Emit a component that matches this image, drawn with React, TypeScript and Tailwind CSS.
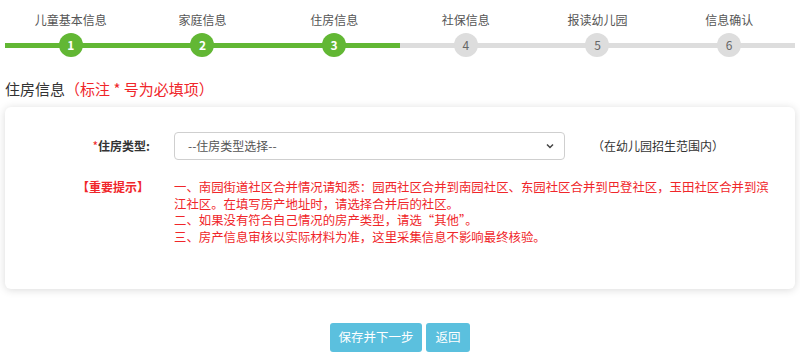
import React from "react";

const steps = ["儿童基本信息", "家庭信息", "住房信息", "社保信息", "报读幼儿园", "信息确认"];
const current = 3;

const font = "font-['Microsoft_YaHei','Noto_Sans_CJK_SC',sans-serif]";

const App = () => {
  return (
    <div className={`w-[800px] h-[364px] bg-white overflow-hidden ${font}`}>
      {/* steps */}
      <div className="relative px-[5px] pt-[12px]">
        <div className="absolute left-[5px] right-[5px] top-[43px] h-[5px] bg-[#dddddd]" />
        <div className="absolute left-[5px] w-[395px] top-[43px] h-[5px] bg-[#62b734]" />
        <div className="relative grid grid-cols-6">
          {steps.map((s, i) => {
            const done = i + 1 <= current;
            return (
              <div key={s} className="flex flex-col items-center">
                <span className="text-[12px] leading-[16px] text-[#555]">{s}</span>
                <span
                  className={
                    done
                      ? "mt-[5px] w-[24px] h-[24px] rounded-full bg-[#62b734] text-white text-[12px] font-bold flex items-center justify-center"
                      : "mt-[5px] w-[24px] h-[24px] rounded-full bg-[#dddddd] text-[#666] text-[12px] flex items-center justify-center"
                  }
                >
                  {i + 1}
                </span>
              </div>
            );
          })}
        </div>
      </div>

      {/* heading */}
      <h2 className="mt-[22px] px-[5px] text-[15px] leading-[20px] text-[#333]">
        住房信息<span className="text-[#f0262a]">（标注 * 号为必填项）</span>
      </h2>

      {/* card */}
      <div className="mx-[5px] mt-[8px] h-[182px] rounded-[6px] bg-white shadow-[0_1px_8px_rgba(0,0,0,0.15)] pt-[25px]">
        <div className="flex items-center h-[28px]">
          <label className="w-[145px] text-right text-[12px] font-bold text-[#333]">
            <span className="text-[#f0262a] font-normal">*</span>住房类型:
          </label>
          <div className="ml-[24px] w-[391px] h-[28px] border border-[#cfcfcf] rounded-[4px] flex items-center justify-between px-[13px] text-[12px] text-[#555]">
            <span>--住房类型选择--</span>
            <svg width="10" height="10" viewBox="0 0 10 10" className="-mr-[4px]">
              <path d="M2 3.5 L5 6.5 L8 3.5" fill="none" stroke="#444" strokeWidth="1.5" />
            </svg>
          </div>
          <span className="ml-[27px] text-[12px] text-[#333]">（在幼儿园招生范围内）</span>
        </div>

        <div className="flex mt-[19px]">
          <div className="w-[169px] pl-[72px] text-[12px] font-bold text-[#f0262a] leading-[16.6px]">【重要提示】</div>
          <div className="w-[605px] text-[12.4px] leading-[16.6px] text-[#f0262a]">
            <p>一、南园街道社区合并情况请知悉：园西社区合并到南园社区、东园社区合并到巴登社区，玉田社区合并到滨江社区。在填写房产地址时，请选择合并后的社区。</p>
            <p>二、如果没有符合自己情况的房产类型，请选“其他”。</p>
            <p>三、房产信息审核以实际材料为准，这里采集信息不影响最终核验。</p>
          </div>
        </div>
      </div>

      {/* buttons */}
      <div className="mt-[34px] flex justify-center gap-[4px]">
        <button className="w-[92px] h-[29px] rounded-[3px] bg-[#5bc0de] text-white text-[12.5px]">保存并下一步</button>
        <button className="w-[44px] h-[29px] rounded-[3px] bg-[#5bc0de] text-white text-[12.5px]">返回</button>
      </div>
    </div>
  );
};

export default App;
